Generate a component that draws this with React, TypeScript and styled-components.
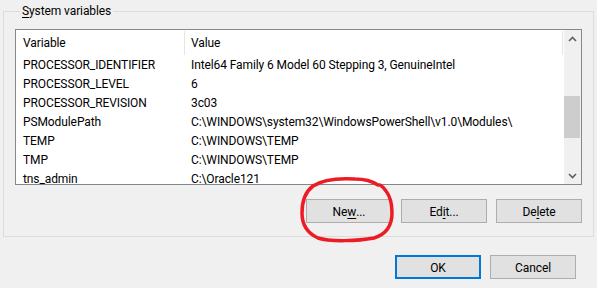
import React from "react";
import styled, { createGlobalStyle } from "styled-components";

const Global = createGlobalStyle`
  html, body { margin: 0; padding: 0; background: #f0f0f0; }
  body { font-family: Roboto, "Liberation Sans", Arial, sans-serif; font-size: 12px; color: #000; letter-spacing: -0.1px; }
`;

const Page = styled.div`
  position: relative;
  width: 597px;
  height: 288px;
  box-sizing: border-box;
  padding-top: 3px;
  overflow: hidden;
`;

const Group = styled.fieldset`
  margin: 0 3px;
  padding: 0 11px 13px 11px;
  border: 1px solid #dcdcdc;
  display: flex;
  flex-direction: column;
  min-width: 0;
`;

const Legend = styled.legend`
  margin-left: 5px;
  padding: 1px 2px 0;
  line-height: 15px;
  height: 16px;
  box-sizing: border-box;
`;

const Accel = styled.span`
  text-decoration: underline;
  text-underline-offset: 2px;
`;

const ListBox = styled.div`
  margin-top: 10px;
  height: 156px;
  box-sizing: border-box;
  border: 1px solid #828790;
  background: #fff;
  display: flex;
  overflow: hidden;
`;

const Table = styled.div`
  flex: 1;
  display: flex;
  flex-direction: column;
  overflow: hidden;
`;

const HeaderRow = styled.div`
  display: grid;
  grid-template-columns: 168px 1px 377px 1px;
  height: 25px;
  flex-shrink: 0;
`;

const HeaderCell = styled.div<{ $pad: number }>`
  height: 25px;
  box-sizing: border-box;
  padding-top: 1px;
  line-height: 25px;
  padding-left: ${(p) => p.$pad}px;
  white-space: nowrap;
  overflow: hidden;
`;

const HeaderSep = styled.div`
  background: #e5e5e5;
  margin-top: 1px;
`;

const Row = styled.div`
  display: grid;
  grid-template-columns: 169px 1fr;
  height: 19px;
  flex-shrink: 0;
`;

const Cell = styled.div<{ $pad: number }>`
  height: 19px;
  box-sizing: border-box;
  padding-top: 1px;
  line-height: 19px;
  padding-left: ${(p) => p.$pad}px;
  white-space: nowrap;
  overflow: hidden;
`;

const ScrollBar = styled.div`
  width: 17px;
  flex-shrink: 0;
  background: #f0f0f0;
  display: flex;
  flex-direction: column;
  margin-left: 1px;
`;

const ArrowBtn = styled.div`
  height: 17px;
  display: flex;
  align-items: center;
  justify-content: center;
  flex-shrink: 0;
`;

const Track = styled.div`
  flex: 1;
`;

const Thumb = styled.div`
  margin-top: 49px;
  width: 16px;
  height: 42px;
  background: #cdcdcd;
`;

const ButtonRow = styled.div<{ $top: number; $right: number }>`
  display: flex;
  justify-content: flex-end;
  gap: 9px;
  margin-top: ${(p) => p.$top}px;
  padding-right: ${(p) => p.$right}px;
`;

const Button = styled.div<{ $default?: boolean }>`
  width: 86px;
  height: 24px;
  box-sizing: border-box;
  background: #e1e1e1;
  border: ${(p) => (p.$default ? "2px solid #0078d7" : "1px solid #adadad")};
  display: flex;
  align-items: center;
  justify-content: center;
  line-height: 16px;
  padding-top: 1px;
`;

const Overlay = styled.svg`
  position: absolute;
  left: 0;
  top: 0;
  pointer-events: none;
`;

const rows: [string, string][] = [
  ["PROCESSOR_IDENTIFIER", "Intel64 Family 6 Model 60 Stepping 3, GenuineIntel"],
  ["PROCESSOR_LEVEL", "6"],
  ["PROCESSOR_REVISION", "3c03"],
  ["PSModulePath", "C:\\WINDOWS\\system32\\WindowsPowerShell\\v1.0\\Modules\\"],
  ["TEMP", "C:\\WINDOWS\\TEMP"],
  ["TMP", "C:\\WINDOWS\\TEMP"],
  ["tns_admin", "C:\\Oracle121"],
];

const Chevron = ({ up }: { up?: boolean }) => (
  <svg width="9" height="6" viewBox="0 0 9 6">
    <path
      d={up ? "M1 5 L4.5 1.5 L8 5" : "M1 1 L4.5 4.5 L8 1"}
      fill="none"
      stroke="#606060"
      strokeWidth="1.6"
    />
  </svg>
);

export default function App() {
  return (
    <>
      <Global />
      <Page>
        <Group>
          <Legend>
            <Accel>S</Accel>ystem variables
          </Legend>
          <ListBox>
            <Table>
              <HeaderRow>
                <HeaderCell $pad={7}>Variable</HeaderCell>
                <HeaderSep />
                <HeaderCell $pad={6}>Value</HeaderCell>
                <HeaderSep />
              </HeaderRow>
              {rows.map(([k, v]) => (
                <Row key={k}>
                  <Cell $pad={7}>{k}</Cell>
                  <Cell $pad={6}>{v}</Cell>
                </Row>
              ))}
            </Table>
            <ScrollBar>
              <ArrowBtn>
                <Chevron up />
              </ArrowBtn>
              <Track>
                <Thumb />
              </Track>
              <ArrowBtn>
                <Chevron />
              </ArrowBtn>
            </ScrollBar>
          </ListBox>
          <ButtonRow $top={14} $right={0}>
            <Button>
              Ne<Accel>w</Accel>...
            </Button>
            <Button>
              Ed<Accel>i</Accel>t...
            </Button>
            <Button>
              De<Accel>l</Accel>ete
            </Button>
          </ButtonRow>
        </Group>
        <ButtonRow $top={18} $right={21}>
          <Button $default>OK</Button>
          <Button>Cancel</Button>
        </ButtonRow>
        <Overlay width="597" height="288" viewBox="0 0 597 288">
          <path
            d="M378 185 C372 181 366 179 355 179 C338 178 322 180 313 186 C305 192 302 202 302 213 C302 225 307 233 318 238 C330 242 358 241 374 238 C387 234 392 225 392 213 C392 203 390 196 386 191 C384 188 382 186 380 185"
            fill="none"
            stroke="#ed1c24"
            strokeWidth="3.5"
            strokeLinecap="round"
          />
        </Overlay>
      </Page>
    </>
  );
}
